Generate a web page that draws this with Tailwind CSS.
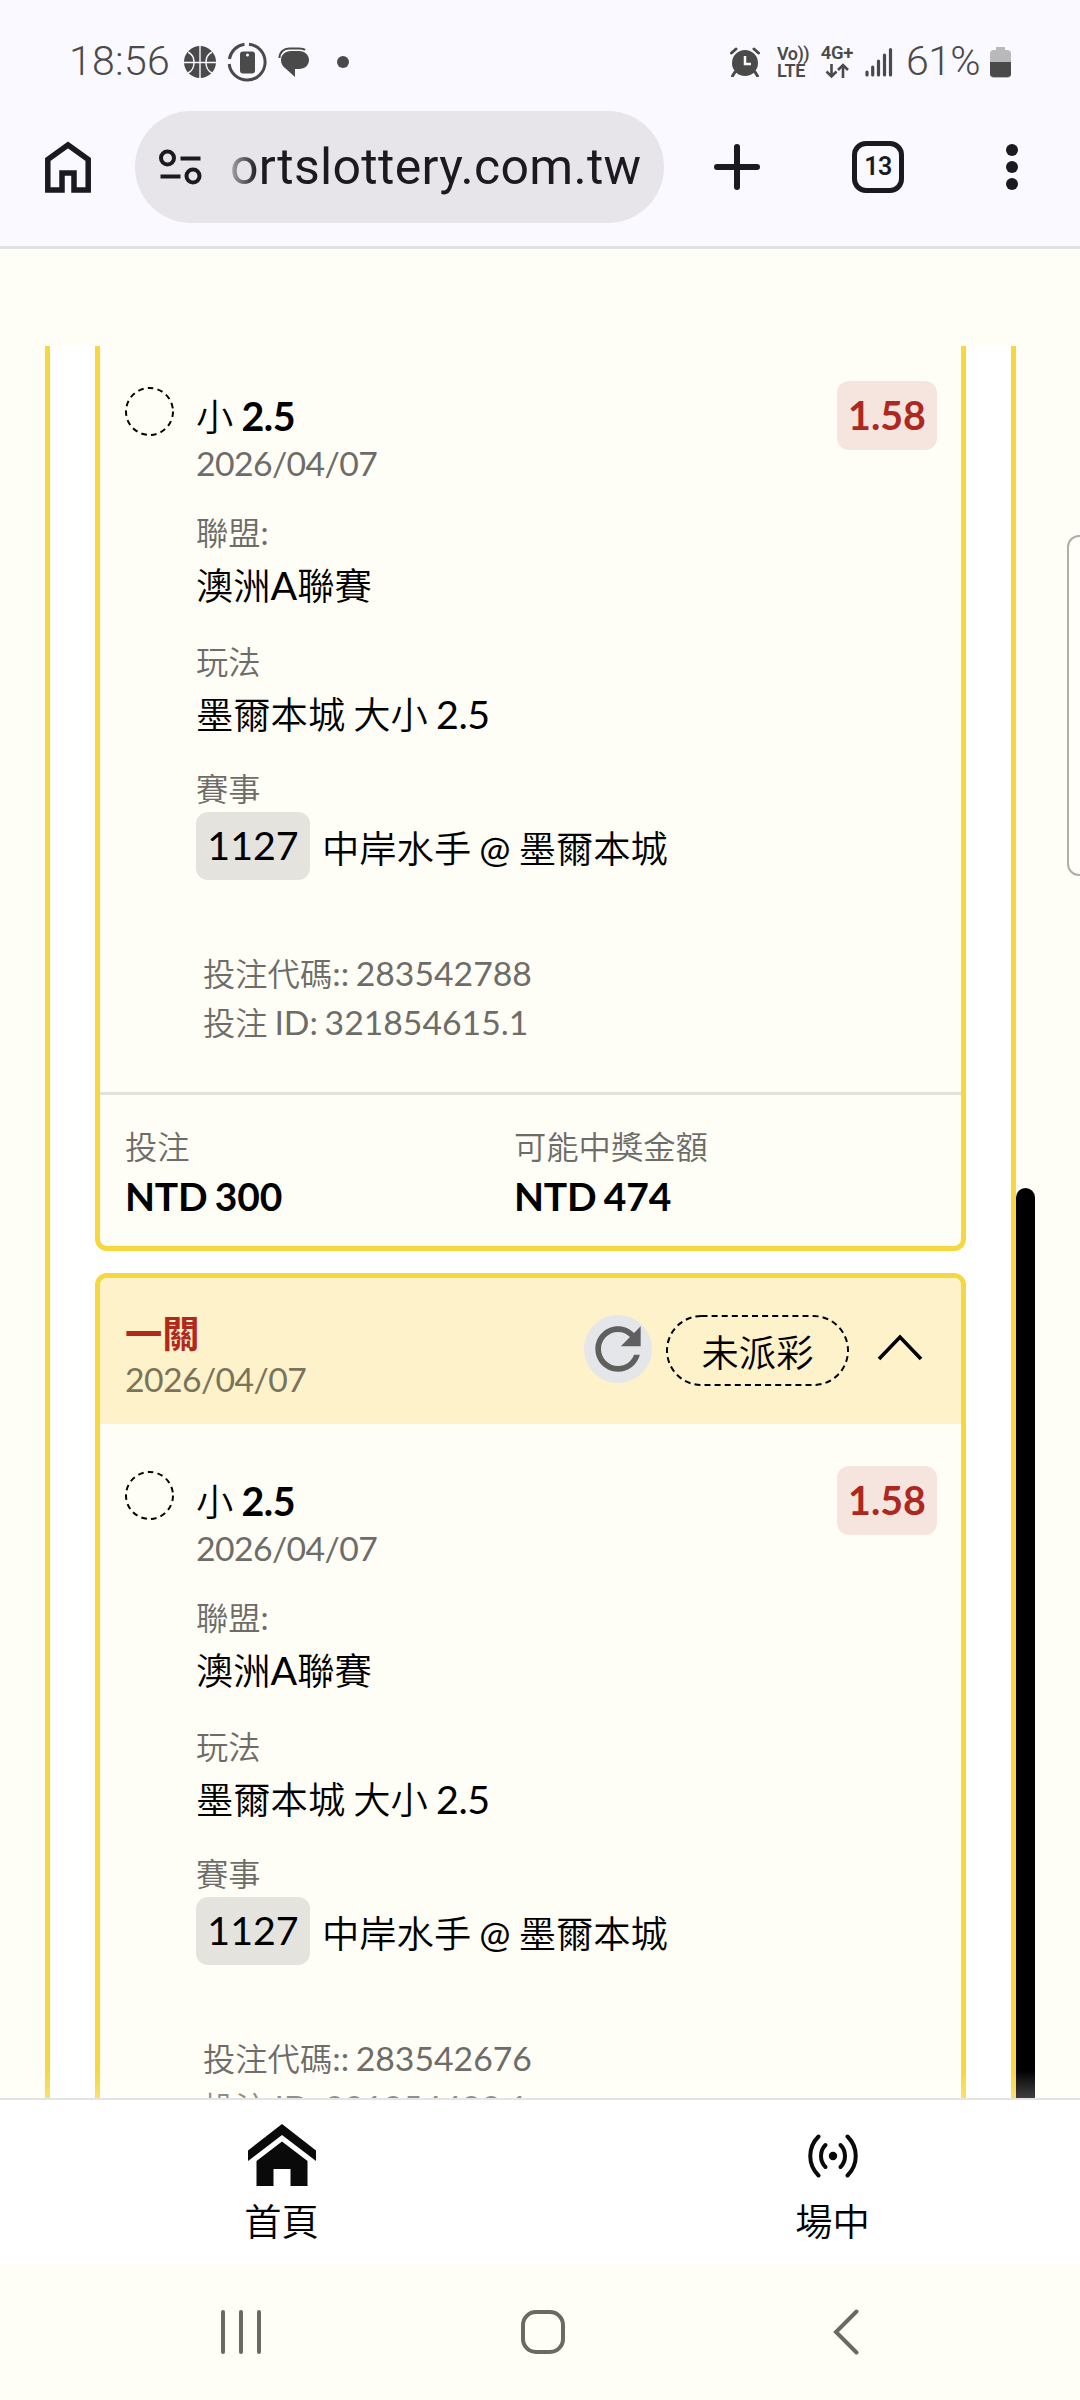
<!DOCTYPE html>
<html lang="zh-Hant">
<head>
    <meta charset="UTF-8">
    <meta name="viewport" content="width=device-width, initial-scale=1.0">
    <title>投注紀錄</title>
    <script src="https://cdn.jsdelivr.net/npm/@tailwindcss/browser@4"></script>
</head>
<body class="w-[1080px] h-[2400px] overflow-hidden flex flex-col bg-[#fffef6] text-black font-['Lato','Noto_Sans_CJK_TC',sans-serif]">

    <!-- Status bar -->
    <header class="h-[249px] shrink-0 bg-[#faf9ff] border-b-3 border-[#e1e0e2] flex flex-col">
        <div class="h-[111px] pt-3 pl-[69px] pr-[69px] flex items-center text-[#4a4a4a] font-['Roboto',sans-serif]">
            <span class="w-[99px] text-[41px] leading-[44px] font-light tracking-[0.3px] -mt-[2px]">18:56</span>
            <svg class="w-8 h-8 ml-4" viewBox="0 0 32 32">
                <circle cx="16" cy="16" r="16" fill="#4a4a4a"/>
                <g fill="none" stroke="#faf9ff" stroke-width="1.4">
                    <path d="M16 0v32M0 16.5h32"/>
                    <path d="M4 6c8 4 8 17 0 21M28 6c-8 4-8 17 0 21"/>
                </g>
            </svg>
            <svg class="w-10 h-10 ml-[11px]" viewBox="0 0 40 40">
                <path d="M22 2.2A18 18 0 1 1 2.2 22M2.4 17A18 18 0 0 1 17.500 2.200" fill="none" stroke="#4a4a4a" stroke-width="3"/>
                <rect x="13" y="9.500" width="15" height="22" rx="3" fill="#4a4a4a"/>
                <circle cx="20.500" cy="13" r="1.500" fill="#faf9ff"/>
            </svg>
            <svg class="w-8 h-8 ml-[11px]" viewBox="0 0 32 32">
                <path d="M13 5h8c6 0 10 4 10 9s-4 9-10 9h-4v8L7 22c-2.500-2-4-4.500-4-8 0-5 4-9 10-9z" fill="#4a4a4a"/>
                <path d="M1.500 12C1.500 6 6 2.500 11 2.500h10c3 0 5 .5 6 1.500" fill="none" stroke="#4a4a4a" stroke-width="2"/>
            </svg>
            <span class="w-3 h-3 ml-[27px] rounded-full bg-[#4a4a4a]"></span>

            <svg class="w-[30px] h-[30px] ml-auto mr-px" viewBox="0 0 30 30">
                <circle cx="15" cy="16" r="13" fill="#4a4a4a"/>
                <path d="M1.500 6L6 2M28.500 6L24 2M5 25l-2.500 4M25 25l2.500 4" stroke="#4a4a4a" stroke-width="3" stroke-linecap="round"/>
                <path d="M15 9v8h6" fill="none" stroke="#faf9ff" stroke-width="2.500"/>
            </svg>
            <div class="w-[31px] ml-4 flex flex-col text-[18px] leading-[17px] font-semibold tracking-[-0.5px]">
                <span class="whitespace-nowrap">Vo))</span>
                <span class="tracking-[-0.2px]">LTE</span>
            </div>
            <div class="w-[34px] ml-3 flex flex-col items-center">
                <span class="text-[18.5px] leading-[17px] font-semibold tracking-[-0.3px]">4G+</span>
                <svg class="w-6 h-4 mt-px" viewBox="0 0 24 16" fill="none" stroke="#4a4a4a" stroke-width="2.600">
                    <path d="M6.500 1v12M1.500 8.500l5 5 5-5M18 15V3M13 7l5-5 5 5"/>
                </svg>
            </div>
            <svg class="w-7 h-[30px] ml-[11px]" viewBox="0 0 28 30" stroke="#4a4a4a" stroke-width="3.200" stroke-linecap="round">
                <path d="M2 25v3M7.700 20v8M13.500 14v14M19.500 8v20M25.500 2.500v25.500"/>
            </svg>
            <span class="w-[80px] ml-[13px] text-[41px] leading-[44px] font-light tracking-[-0.6px] -mt-[2px]">61%</span>
            <svg class="w-[21px] h-8 ml-1" viewBox="0 0 21 32">
                <path d="M6 1h9v4H6z" fill="#b9b9bc"/>
                <rect y="4" width="21" height="28" rx="4" fill="#b9b9bc"/>
                <path d="M0 16h21v12q0 3-4 3H4q-4 0-4-3z" fill="#4a4a4a"/>
            </svg>
        </div>

        <!-- Browser toolbar -->
        <div class="h-28 flex items-center text-[#1b1a20] font-['Roboto',sans-serif]">
            <svg class="w-[46px] h-[52px] ml-[45px]" viewBox="0 0 46 52" fill="none" stroke="#1b1a20" stroke-width="5.500">
                <path d="M2.800 18.500L23 4l20.200 14.500V49H29V32H17v17H2.800z"/>
            </svg>
            <div class="w-[529px] h-28 ml-11 rounded-full bg-[#e7e5ea] flex items-center">
                <svg class="w-[43px] h-9 ml-6" viewBox="0 0 43 36" fill="none" stroke="#1b1a20" stroke-width="4">
                    <circle cx="8.500" cy="9" r="6.500"/>
                    <path d="M21.500 9.500h20M1.500 27.500h20"/>
                    <circle cx="34" cy="27" r="6.500"/>
                </svg>
                <span class="ml-[28px] text-[50px] leading-[60px] tracking-[0.3px] whitespace-nowrap [mask-image:linear-gradient(to_right,rgba(0,0,0,0.3),black_28px)]">ortslottery.com.tw</span>
            </div>
            <svg class="w-[46px] h-[46px] ml-[50px]" viewBox="0 0 46 46" stroke="#1b1a20" stroke-width="6" stroke-linecap="round">
                <path d="M23 3v40M3 23h40"/>
            </svg>
            <div class="w-[52px] h-[52px] ml-[92px] rounded-[14px] border-[5.500px] border-[#1b1a20] flex items-center justify-center text-[25px] font-semibold tracking-[-0.5px]">13</div>
            <div class="ml-[102px] flex flex-col gap-[5px]">
                <span class="w-3 h-3 rounded-full bg-[#1b1a20]"></span>
                <span class="w-3 h-3 rounded-full bg-[#1b1a20]"></span>
                <span class="w-3 h-3 rounded-full bg-[#1b1a20]"></span>
            </div>
        </div>
    </header>

    <!-- Bet history -->
    <main class="relative h-[1849px] shrink-0 pt-[97px] overflow-hidden">
        <div class="w-[971px] h-[1752px] ml-[45px] px-[45px] bg-white border-x-5 border-[#f6d73f] overflow-hidden">

            <section class="h-[905px] rounded-b-xl border-5 border-t-0 border-[#f6d73f] bg-[#fffef6] overflow-hidden">
                <div class="h-[746px] pt-[35px] pl-[25px] pr-6 flex items-start">
                    <svg class="w-[49px] h-[49px] mt-[6px]" viewBox="0 0 49 49">
                        <circle cx="24.500" cy="24.500" r="23.500" fill="none" stroke="#000" stroke-width="2" stroke-dasharray="5.600 4.245"/>
                    </svg>
                    <div class="ml-[22px] mt-[13px] text-[37.3px] leading-[53px] font-[350] [word-spacing:-2px]">
                        <p class="leading-[46px]">小 <b class="text-[39.4px] leading-none font-bold tracking-[-0.5px]">2.5</b></p>
                        <p class="text-[33.75px] leading-[46px] font-normal tracking-[-0.6px] text-[#6d6c68]">2026/04/07</p>
                        <p class="mt-5 text-[32.3px] text-[#6d6c68]">聯盟<span class="font-normal">:</span></p>
                        <p>澳洲<span class="text-[39.4px] leading-none font-normal">A</span>聯賽</p>
                        <p class="mt-[23px] text-[32.3px] text-[#6d6c68]">玩法</p>
                        <p>墨爾本城 大小 <span class="text-[39.4px] leading-none font-normal tracking-[-0.5px]">2.5</span></p>
                        <p class="mt-[25px] text-[32.3px] leading-[46px] text-[#6d6c68]">賽事</p>
                        <p class="h-[68px] flex items-center">
                            <span class="w-[114px] h-[68px] rounded-xl bg-[#e5e3de] text-center text-[39.4px] leading-[66px] font-normal">1127</span>
                            <span class="ml-3 mt-1">中岸水手 <span class="font-normal">@</span> 墨爾本城</span>
                        </p>
                        <p class="mt-[69px] ml-[7px] text-[32.3px] leading-[49px] text-[#6d6c68]">投注代碼<span class="text-[33.75px] leading-none font-normal">:: 283542788</span><br>投注 <span class="text-[33.75px] leading-none font-normal">ID: 321854615.1</span></p>
                    </div>
                    <span class="w-[100px] h-[69px] ml-auto rounded-xl bg-[#f6e5df] text-center text-[39.4px] leading-[68px] font-bold text-[#ad281f]">1.58</span>
                </div>
                <div class="h-[154px] pt-[26px] pl-[25px] border-t-3 border-[#e4e2dc] flex leading-[51px]">
                    <div class="w-[389px]">
                        <p class="text-[32.3px] font-[350] text-[#6d6c68]">投注</p>
                        <p class="text-[39px] leading-[49px] font-bold [word-spacing:-2px] tracking-[-0.2px]">NTD 300</p>
                    </div>
                    <div>
                        <p class="text-[32.3px] font-[350] text-[#6d6c68]">可能中獎金額</p>
                        <p class="text-[39px] leading-[49px] font-bold [word-spacing:-2px] tracking-[-0.2px]">NTD 474</p>
                    </div>
                </div>
            </section>

            <section class="h-[1100px] mt-[22px] rounded-t-xl border-5 border-[#f6d73f] bg-[#fffef6] overflow-hidden">
                <div class="h-[146px] pl-[25px] flex items-start bg-[#fef2cb]">
                    <div class="mt-[33px]">
                        <p class="text-[37.3px] leading-[46px] font-bold text-[#b2291c]">一關</p>
                        <p class="text-[33.75px] leading-[44px] tracking-[-0.6px] text-[#7a735b]">2026/04/07</p>
                    </div>
                    <div class="w-[68px] h-[68px] ml-auto mt-[37px] rounded-full bg-[#e4e6e9] flex items-center justify-center">
                        <svg class="w-[68px] h-[68px]" viewBox="0 0 24 24" fill="#5f5f5f">
                            <path d="M17.650 6.350C16.200 4.900 14.210 4 12 4c-4.420 0-7.990 3.580-7.990 8s3.570 8 7.990 8c3.730 0 6.840-2.550 7.730-6h-2.080c-.82 2.330-3.040 4-5.650 4-3.310 0-6-2.690-6-6s2.690-6 6-6c1.660 0 3.140.69 4.220 1.780L13 11h7V4l-2.350 2.350z"/>
                        </svg>
                    </div>
                    <div class="relative w-[183px] h-[71px] ml-[14px] mt-[37px]">
                        <svg class="absolute inset-0 w-[183px] h-[71px]" viewBox="0 0 183 71">
                            <rect x="1" y="1" width="181" height="69" rx="34.500" fill="none" stroke="#000" stroke-width="2" stroke-dasharray="6 4.100"/>
                        </svg>
                        <p class="text-center text-[37.3px] leading-[76px] font-[350]">未派彩</p>
                    </div>
                    <svg class="w-[46px] h-[28px] ml-[28px] mr-[38px] mt-[55px]" viewBox="0 0 46 28" fill="none" stroke="#000" stroke-width="3.600">
                        <path d="M2 26L23 4l21 22"/>
                    </svg>
                </div>
                <div class="h-[900px] pt-[42px] pl-[25px] pr-6 flex items-start">
                    <svg class="w-[49px] h-[49px] mt-[5px]" viewBox="0 0 49 49">
                        <circle cx="24.500" cy="24.500" r="23.500" fill="none" stroke="#000" stroke-width="2" stroke-dasharray="5.600 4.245"/>
                    </svg>
                    <div class="ml-[22px] mt-[13px] text-[37.3px] leading-[53px] font-[350] [word-spacing:-2px]">
                        <p class="leading-[46px]">小 <b class="text-[39.4px] leading-none font-bold tracking-[-0.5px]">2.5</b></p>
                        <p class="text-[33.75px] leading-[46px] font-normal tracking-[-0.6px] text-[#6d6c68]">2026/04/07</p>
                        <p class="mt-5 text-[32.3px] text-[#6d6c68]">聯盟<span class="font-normal">:</span></p>
                        <p>澳洲<span class="text-[39.4px] leading-none font-normal">A</span>聯賽</p>
                        <p class="mt-[23px] text-[32.3px] text-[#6d6c68]">玩法</p>
                        <p>墨爾本城 大小 <span class="text-[39.4px] leading-none font-normal tracking-[-0.5px]">2.5</span></p>
                        <p class="mt-[25px] text-[32.3px] leading-[46px] text-[#6d6c68]">賽事</p>
                        <p class="h-[68px] flex items-center">
                            <span class="w-[114px] h-[68px] rounded-xl bg-[#e5e3de] text-center text-[39.4px] leading-[66px] font-normal">1127</span>
                            <span class="ml-3 mt-1">中岸水手 <span class="font-normal">@</span> 墨爾本城</span>
                        </p>
                        <p class="mt-[69px] ml-[7px] text-[32.3px] leading-[49px] text-[#6d6c68]">投注代碼<span class="text-[33.75px] leading-none font-normal">:: 283542676</span><br>投注 <span class="text-[33.75px] leading-none font-normal">ID: 321854482.1</span></p>
                    </div>
                    <span class="w-[100px] h-[69px] ml-auto rounded-xl bg-[#f6e5df] text-center text-[39.4px] leading-[68px] font-bold text-[#ad281f]">1.58</span>
                </div>
            </section>
        </div>

        <!-- Scrollbar thumb, edge panel handle, bottom fade -->
        <div class="absolute left-[1016px] top-[939px] w-[19px] h-[910px] rounded-t-full bg-black"></div>
        <div class="absolute left-[1067px] top-[286px] w-10 h-[341px] rounded-xl border-2 border-[#aeaeaa] bg-[#fffef9]"></div>
        <div class="absolute left-0 bottom-0 w-full h-7 bg-linear-to-b from-white/0 to-white/25"></div>
    </main>

    <!-- Site tabs -->
    <nav class="h-[166px] shrink-0 bg-white border-t-2 border-[#e4e4e4] pl-[6px] flex text-[37.3px] leading-[46px] font-[350]">
        <a class="w-[551px] shrink-0 flex flex-col items-center">
            <svg class="w-[68px] h-[62px] mt-6" viewBox="0 0 68 62" fill="#0a0a0a">
                <path d="M34 0l34 26.500V37L34 11 0 37V26.500z"/>
                <path d="M34 17.500L59.500 37v25H42.500V45h-17v17H8.500V37z"/>
            </svg>
            <span class="mt-[13px]">首頁</span>
        </a>
        <a class="w-[551px] shrink-0 flex flex-col items-center">
            <svg class="w-[52px] h-11 mt-[34px]" viewBox="0 0 52 44" fill="none" stroke="#0a0a0a" stroke-width="4" stroke-linecap="round">
                <circle cx="26" cy="22" r="4.200" fill="#0a0a0a" stroke="none"/>
                <path d="M18.500 11c-6 6-6 16 0 22M33.500 11c6 6 6 16 0 22"/>
                <path d="M11.500 2.500c-11 11-11 28 0 39M40.500 2.500c11 11 11 28 0 39"/>
            </svg>
            <span class="mt-[21px]">場中</span>
        </a>
    </nav>

    <!-- System navigation -->
    <footer class="h-[136px] shrink-0 flex items-center">
        <div class="ml-[221px] flex gap-[14px]">
            <span class="w-1 h-11 rounded-full bg-[#6a6963]"></span>
            <span class="w-1 h-11 rounded-full bg-[#6a6963]"></span>
            <span class="w-1 h-11 rounded-full bg-[#6a6963]"></span>
        </div>
        <div class="w-11 h-11 ml-[260px] rounded-[15px] border-4 border-[#6a6963]"></div>
        <svg class="w-[26px] h-[46px] ml-[268px]" viewBox="0 0 26 46" fill="none" stroke="#6a6963" stroke-width="4" stroke-linecap="round">
            <path d="M23.500 2.500L3 23l20.500 20.500"/>
        </svg>
    </footer>
</body>
</html>
